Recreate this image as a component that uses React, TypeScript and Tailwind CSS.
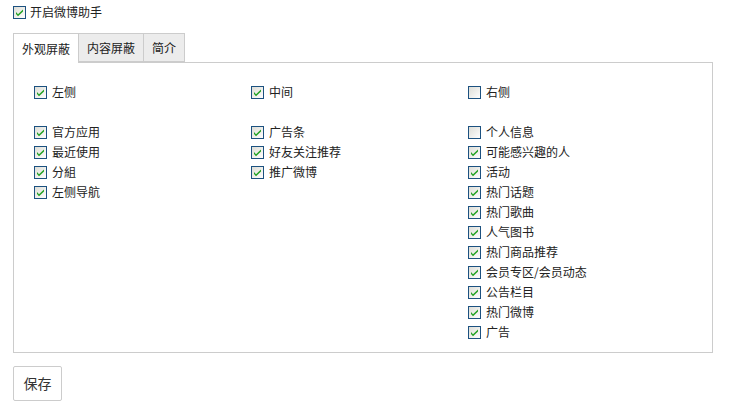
import { useState } from 'react';

// XP-style checkbox used throughout the settings page
function Check({ checked }: { checked: boolean }) {
  return (
    <svg width="13" height="13" viewBox="0 0 13 13" className="shrink-0">
      <defs>
        <linearGradient id="cbg" x1="0" y1="0" x2="1" y2="1">
          <stop offset="0" stopColor="#dcdcd5" />
          <stop offset="1" stopColor="#ffffff" />
        </linearGradient>
      </defs>
      <rect x="0.5" y="0.5" width="12" height="12" fill="url(#cbg)" stroke="#1c5180" />
      {checked && (
        <path d="M3 6 L5 8.2 L10 3.5 L10 5.5 L5 10.2 L3 8 Z" fill="#21a121" />
      )}
    </svg>
  );
}

function Row({ label, checked }: { label: string; checked: boolean }) {
  return (
    <label className="flex items-center h-5 gap-[5px] text-[12px] text-[#222]">
      <Check checked={checked} />
      <span>{label}</span>
    </label>
  );
}

const cols = [
  {
    head: { label: '左侧', checked: true },
    items: [
      { label: '官方应用', checked: true },
      { label: '最近使用', checked: true },
      { label: '分組', checked: true },
      { label: '左侧导航', checked: true },
    ],
  },
  {
    head: { label: '中间', checked: true },
    items: [
      { label: '广告条', checked: true },
      { label: '好友关注推荐', checked: true },
      { label: '推广微博', checked: true },
    ],
  },
  {
    head: { label: '右侧', checked: false },
    items: [
      { label: '个人信息', checked: false },
      { label: '可能感兴趣的人', checked: true },
      { label: '活动', checked: true },
      { label: '热门话题', checked: true },
      { label: '热门歌曲', checked: true },
      { label: '人气图书', checked: true },
      { label: '热门商品推荐', checked: true },
      { label: '会员专区/会员动态', checked: true },
      { label: '公告栏目', checked: true },
      { label: '热门微博', checked: true },
      { label: '广告', checked: true },
    ],
  },
];

export default function App() {
  const [tab, setTab] = useState(0);
  const tabs = ['外观屏蔽', '内容屏蔽', '简介'];

  return (
    <div
      className="w-[733px] h-[408px] bg-white pl-[13px] pt-[2px]"
      style={{ fontFamily: '"Noto Sans CJK SC", "Liberation Sans", sans-serif' }}
    >
      <div className="flex items-center h-5 gap-[4px] text-[12px] text-[#222]">
        <Check checked={true} />
        <span>开启微博助手</span>
      </div>

      {/* tabs */}
      <div className="flex mt-[11px] h-[29px] w-[700px] relative">
        {tabs.map((t, i) => (
          <button
            key={t}
            onClick={() => setTab(i)}
            className={
              i === tab
                ? 'h-[30px] px-[8px] text-[12px] text-[#222] bg-white border border-[#ccc] border-b-0 relative z-10'
                : 'h-[29px] px-[8px] text-[12px] text-[#222] bg-[#ececec] border border-[#ccc] border-l-0'
            }
          >
            {t}
          </button>
        ))}
      </div>

      {/* panel */}
      <div className="w-[700px] h-[291px] border border-[#ccc] pl-[20px] pt-[19px]">
        <div className="grid grid-cols-[217px_217px_217px]">
          {cols.map((c) => (
            <div key={c.head.label} className="flex flex-col">
              <Row label={c.head.label} checked={c.head.checked} />
              <div className="h-5" />
              {c.items.map((it) => (
                <Row key={it.label} label={it.label} checked={it.checked} />
              ))}
            </div>
          ))}
        </div>
      </div>

      <button className="mt-[13px] w-[49px] h-[35px] border border-[#ccc] rounded-[2px] bg-white text-[14px] text-[#333]">
        保存
      </button>
    </div>
  );
}
